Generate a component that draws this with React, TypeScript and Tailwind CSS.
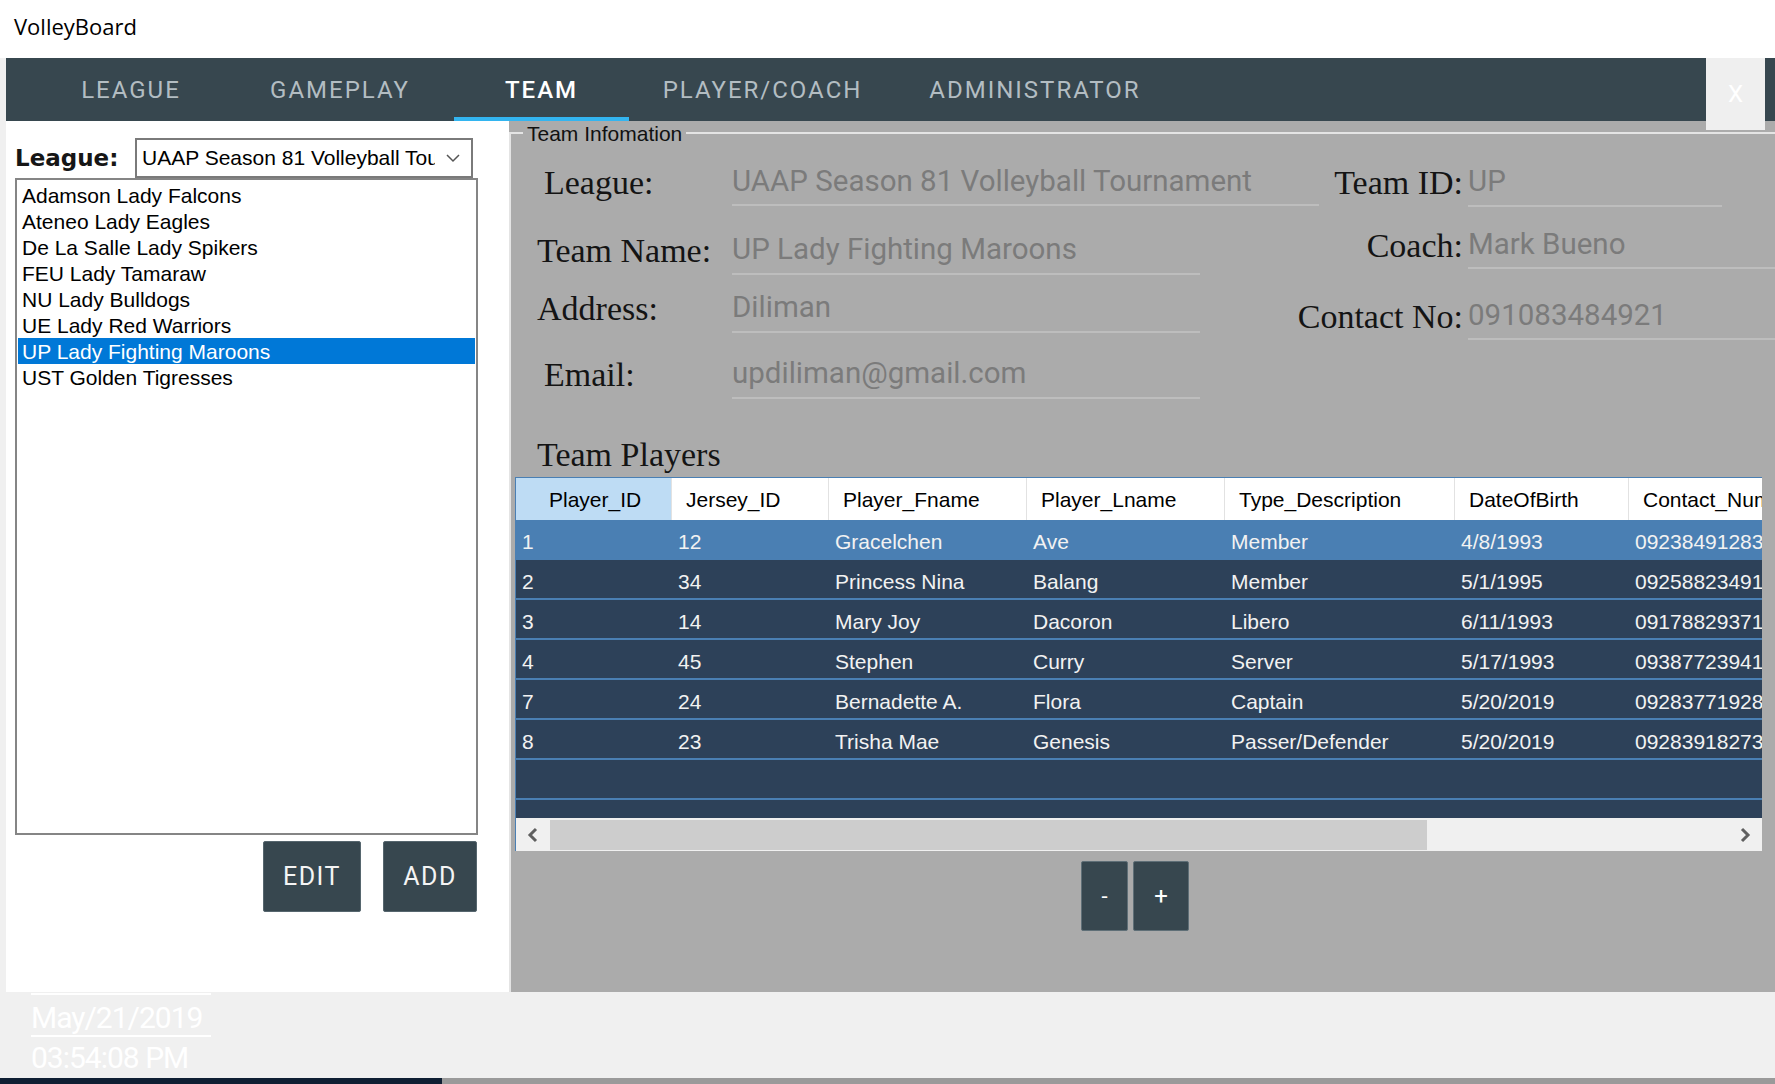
import React from 'react';

const teams = [
  'Adamson Lady Falcons',
  'Ateneo Lady Eagles',
  'De La Salle Lady Spikers',
  'FEU Lady Tamaraw',
  'NU Lady Bulldogs',
  'UE Lady Red Warriors',
  'UP Lady Fighting Maroons',
  'UST Golden Tigresses',
];

const players = [
  ['1', '12', 'Gracelchen', 'Ave', 'Member', '4/8/1993', '09238491283'],
  ['2', '34', 'Princess Nina', 'Balang', 'Member', '5/1/1995', '09258823491'],
  ['3', '14', 'Mary Joy', 'Dacoron', 'Libero', '6/11/1993', '09178829371'],
  ['4', '45', 'Stephen', 'Curry', 'Server', '5/17/1993', '09387723941'],
  ['7', '24', 'Bernadette A.', 'Flora', 'Captain', '5/20/2019', '09283771928'],
  ['8', '23', 'Trisha Mae', 'Genesis', 'Passer/Defender', '5/20/2019', '09283918273'],
];

const colW = ['w-[155px]', 'w-[157px]', 'w-[198px]', 'w-[198px]', 'w-[230px]', 'w-[174px]', 'w-[200px]'];
const headers = ['Player_ID', 'Jersey_ID', 'Player_Fname', 'Player_Lname', 'Type_Description', 'DateOfBirth', 'Contact_Number'];

const tabs = [
  { label: 'LEAGUE', w: 'w-[250px]', active: false },
  { label: 'GAMEPLAY', w: 'w-[168px]', active: false },
  { label: 'TEAM', w: 'w-[235px]', active: true },
  { label: 'PLAYER/COACH', w: 'w-[207px]', active: false },
  { label: 'ADMINISTRATOR', w: 'w-[338px]', active: false },
];

const labelCls = "font-['Liberation_Serif',serif] text-[34px] leading-none text-[#141414] whitespace-nowrap";
const valueCls =
  "font-['Roboto',sans-serif] text-[29.5px] leading-none text-[#7b7b7b] whitespace-nowrap overflow-hidden border-b-2 border-[#bdbdbd] flex items-center";

function Chevron({ dir }: { dir: 'left' | 'right' }) {
  return (
    <svg width="12" height="16" viewBox="0 0 12 16">
      <polyline
        points={dir === 'left' ? '9,2 3,8 9,14' : '3,2 9,8 3,14'}
        fill="none"
        stroke="#5f5f5f"
        strokeWidth="3"
      />
    </svg>
  );
}

function LeftPanel() {
  return (
    <div className="w-[503px] flex-none bg-white flex flex-col pt-[17px] pl-[9px] font-['Liberation_Sans',Arial,sans-serif]">
      <div className="flex items-center h-[40px]">
        <span className="w-[120px] flex-none font-['DejaVu_Sans',sans-serif] font-bold text-[23px] text-[#161616]">
          League:
        </span>
        <div className="w-[338px] h-[40px] flex-none border-2 border-[#7a7a7a] bg-white flex items-center pl-[5px]">
          <span className="w-[293px] overflow-hidden whitespace-nowrap text-[21px] text-black">
            UAAP Season 81 Volleyball Tournament
          </span>
          <div className="flex-1 flex justify-center items-center">
            <svg width="14" height="9" viewBox="0 0 14 9">
              <polyline points="1,1 7,7 13,1" fill="none" stroke="#555" strokeWidth="1.5" />
            </svg>
          </div>
        </div>
      </div>
      <div className="w-[463px] h-[657px] border-2 border-[#858585] pt-[2px] flex flex-col">
        {teams.map((t) => (
          <div
            key={t}
            className={
              t === 'UP Lady Fighting Maroons'
                ? 'h-[26px] mx-[1px] flex items-center pl-[4px] pt-[2px] text-[21px] bg-[#0078d7] text-white whitespace-nowrap'
                : 'h-[26px] mx-[1px] flex items-center pl-[4px] pt-[2px] text-[21px] text-black whitespace-nowrap'
            }
          >
            {t}
          </div>
        ))}
      </div>
      <div className="w-[463px] flex justify-end gap-[22px] mt-[6px] pr-[1px]">
        <button className="w-[98px] h-[71px] bg-[#37474f] border border-[#56666e] rounded-[2px] text-[#f4f4f4] font-['Roboto',sans-serif] text-[25px] tracking-[1.5px]">
          EDIT
        </button>
        <button className="w-[94px] h-[71px] bg-[#37474f] border border-[#56666e] rounded-[2px] text-[#f4f4f4] font-['Roboto',sans-serif] text-[25px] tracking-[1.5px]">
          ADD
        </button>
      </div>
    </div>
  );
}

function PlayersTable() {
  return (
    <div className="ml-[4px] mt-[4px] w-[1247px] overflow-hidden border-t border-l border-[#4a7fb3] bg-[#2d4159] flex flex-col font-['Liberation_Sans',Arial,sans-serif]">
      <div className="h-[42px] bg-white flex">
        {headers.map((h, i) => (
          <div
            key={h}
            className={
              i === 0
                ? `${colW[i]} flex-none flex items-center pl-[33px] pt-[2px] bg-[#bedcf4] text-[21px] text-black whitespace-nowrap`
                : `${colW[i]} flex-none flex items-center pl-[14px] pt-[2px] border-l border-[#e2e2e2] text-[21px] text-black whitespace-nowrap`
            }
          >
            {h}
          </div>
        ))}
      </div>
      {players.map((p, r) => (
        <div
          key={p[0]}
          className={
            r === 0
              ? 'h-[40px] flex-none flex bg-[#4a7fb3] border-b-2 border-[#4a7fb3]'
              : 'h-[40px] flex-none flex bg-[#2d4159] border-b-2 border-[#4a7fb3]'
          }
        >
          {p.map((v, i) => (
            <div
              key={i}
              className={`${colW[i]} flex-none flex items-center ${i === 0 ? 'pl-[6px]' : 'pl-[7px]'} pt-[6px] text-[21px] text-[#f2f2f2] whitespace-nowrap overflow-hidden`}
            >
              {v}
            </div>
          ))}
        </div>
      ))}
      <div className="h-[40px] flex-none border-b-2 border-[#4a7fb3]" />
      <div className="h-[18px] flex-none" />
      <div className="h-[33px] flex-none bg-[#f0f0f0] flex">
        <div className="w-[34px] flex-none flex items-center justify-center">
          <Chevron dir="left" />
        </div>
        <div className="w-[877px] flex-none bg-[#cdcdcd] mt-[2px] mb-[1px]" />
        <div className="flex-1" />
        <div className="w-[34px] flex-none flex items-center justify-center">
          <Chevron dir="right" />
        </div>
      </div>
    </div>
  );
}

function RightPanel() {
  return (
    <div className="flex-1 bg-[#ababab] flex flex-col pt-[11px]">
      <div className="relative flex-1 border-t-2 border-l-2 border-[#e4e4e4] flex flex-col">
        <span className="absolute -top-[13px] left-[12px] px-[4px] bg-[#ababab] h-[26px] leading-[26px] text-[21px] text-[#111] font-['Liberation_Sans',Arial,sans-serif] whitespace-nowrap">
          Team Infomation
        </span>

        <div className="flex mt-[25px] ml-[26px]">
          <div className="w-[782px] flex-none flex flex-col pt-[1px]">
            <div className="h-[46px] flex">
              <div className={`w-[195px] flex-none flex items-center pl-[7px] ${labelCls}`}>League:</div>
              <div className={`w-[587px] ${valueCls}`}>UAAP Season 81 Volleyball Tournament</div>
            </div>
            <div className="h-[48px] flex mt-[21px]">
              <div className={`w-[195px] flex-none flex items-center ${labelCls}`}>Team Name:</div>
              <div className={`w-[468px] ${valueCls}`}>UP Lady Fighting Maroons</div>
            </div>
            <div className="h-[48px] flex mt-[10px]">
              <div className={`w-[195px] flex-none flex items-center ${labelCls}`}>Address:</div>
              <div className={`w-[468px] ${valueCls}`}>Diliman</div>
            </div>
            <div className="h-[48px] flex mt-[18px]">
              <div className={`w-[195px] flex-none flex items-center pl-[7px] ${labelCls}`}>Email:</div>
              <div className={`w-[468px] ${valueCls}`}>updiliman@gmail.com</div>
            </div>
          </div>
          <div className="flex-1 flex flex-col min-w-0">
            <div className="h-[48px] flex">
              <div className={`w-[144px] flex-none flex items-center justify-end ${labelCls}`}>Team ID:</div>
              <div className={`w-[254px] ml-[5px] ${valueCls}`}>UP</div>
            </div>
            <div className="h-[46px] flex mt-[16px]">
              <div className={`w-[144px] flex-none flex items-center justify-end ${labelCls}`}>Coach:</div>
              <div className={`flex-1 ml-[5px] ${valueCls}`}>Mark Bueno</div>
            </div>
            <div className="h-[46px] flex mt-[25px]">
              <div className={`w-[144px] flex-none flex items-center justify-end ${labelCls}`}>Contact No:</div>
              <div className={`flex-1 ml-[5px] ${valueCls}`}>091083484921</div>
            </div>
          </div>
        </div>

        <div className={`ml-[26px] mt-[38px] h-[36px] flex items-center ${labelCls}`}>Team Players</div>

        <PlayersTable />

        <div className="flex gap-[5px] ml-[570px] mt-[10px]">
          <button className="w-[47px] h-[70px] bg-[#37474f] border border-[#5f6f77] rounded-[2px] text-white font-['Roboto',sans-serif] text-[22px]">
            -
          </button>
          <button className="w-[56px] h-[70px] bg-[#37474f] border border-[#5f6f77] rounded-[2px] text-white font-['Roboto',sans-serif] text-[24px]">
            +
          </button>
        </div>
      </div>
    </div>
  );
}

export default function App() {
  return (
    <div className="relative w-[1775px] h-[1084px] overflow-hidden bg-[#f0f0f0] font-['Liberation_Sans',Arial,sans-serif]">
      <div className="h-[58px] bg-white flex items-center pl-[14px] pb-[6px]">
        <span className="font-['Open_Sans',sans-serif] text-[22px] text-black">VolleyBoard</span>
      </div>

      <div className="flex flex-col pl-[6px] h-[934px]">
        <nav className="h-[63px] flex-none bg-[#37474f] flex">
          {tabs.map((t) => (
            <div key={t.label} className={`${t.w} flex-none flex flex-col items-center`}>
              <div
                className={
                  t.active
                    ? "flex-1 flex items-center pt-[4px] font-['Roboto',sans-serif] font-medium text-[24px] tracking-[2px] text-white"
                    : "flex-1 flex items-center pt-[4px] font-['Roboto',sans-serif] text-[24px] tracking-[2px] text-[#b3bdc2]"
                }
              >
                {t.label}
              </div>
              <div className={t.active ? 'w-[175px] h-[4px] bg-[#33b5f0]' : 'w-[175px] h-[4px]'} />
            </div>
          ))}
        </nav>
        <div className="flex flex-1 min-h-0">
          <LeftPanel />
          <RightPanel />
        </div>
      </div>

      <div className="h-[86px] flex flex-col pl-[31px] pt-[1px]">
        <div className="w-[180px] h-[44px] border-y-2 border-white flex items-center pt-[4px] font-['Roboto',sans-serif] text-[30px] tracking-[-1px] text-white">
          May/21/2019
        </div>
        <div className="h-[36px] flex items-center pt-[4px] font-['Roboto',sans-serif] text-[30px] tracking-[-1px] text-white">
          03:54:08 PM
        </div>
      </div>
      <div className="h-[6px] flex">
        <div className="w-[442px] bg-[#0f1f33]" />
        <div className="flex-1 bg-[#9a9a9a]" />
      </div>

      <div className="absolute left-[1706px] top-[58px] w-[59px] h-[72px] bg-[#efefef] flex items-center justify-center font-['Roboto',sans-serif] text-[24px] text-white">
        X
      </div>
    </div>
  );
}
